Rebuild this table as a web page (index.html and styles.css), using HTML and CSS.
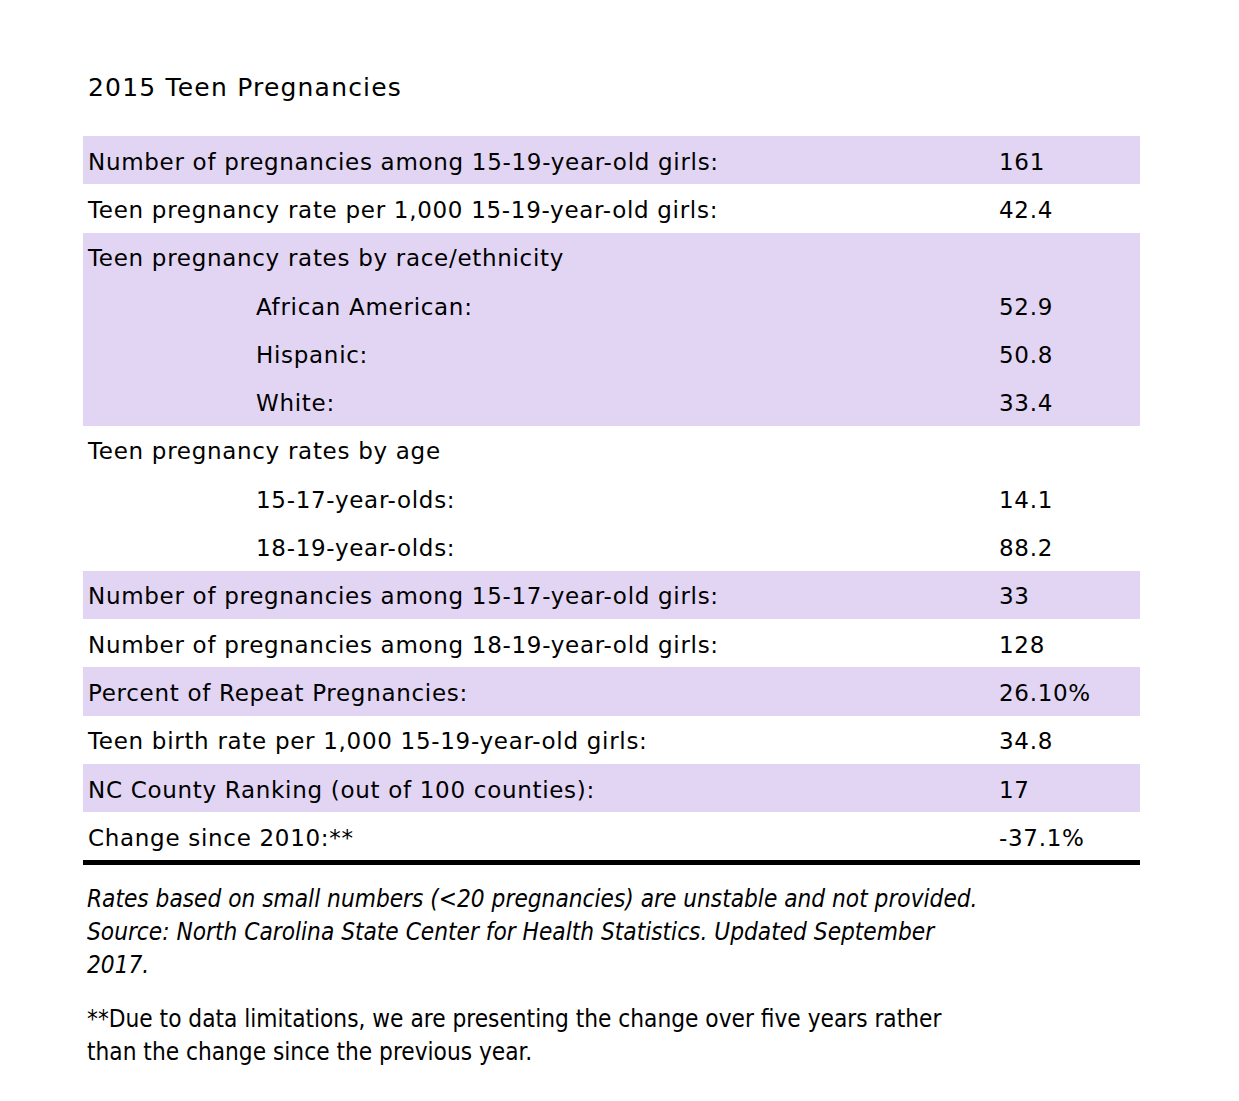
FILE: index.html
```html
<!DOCTYPE html>
<html lang="en">
<head>
<meta charset="utf-8">
<title>2015 Teen Pregnancies</title>
<link rel="stylesheet" href="styles.css">
</head>
<body>
<main class="page">
  <h1 class="title">2015 Teen Pregnancies</h1>
  <div class="stats">
    <div class="row shade"><span class="label">Number of pregnancies among 15-19-year-old girls:</span><span class="value">161</span></div>
    <div class="row"><span class="label">Teen pregnancy rate per 1,000 15-19-year-old girls:</span><span class="value">42.4</span></div>
    <div class="group shade">
      <div class="row"><span class="label">Teen pregnancy rates by race/ethnicity</span><span class="value"></span></div>
      <div class="row"><span class="label sub">African American:</span><span class="value">52.9</span></div>
      <div class="row"><span class="label sub">Hispanic:</span><span class="value">50.8</span></div>
      <div class="row"><span class="label sub">White:</span><span class="value">33.4</span></div>
    </div>
    <div class="group">
      <div class="row"><span class="label">Teen pregnancy rates by age</span><span class="value"></span></div>
      <div class="row"><span class="label sub">15-17-year-olds:</span><span class="value">14.1</span></div>
      <div class="row"><span class="label sub">18-19-year-olds:</span><span class="value">88.2</span></div>
    </div>
    <div class="row shade"><span class="label">Number of pregnancies among 15-17-year-old girls:</span><span class="value">33</span></div>
    <div class="row"><span class="label">Number of pregnancies among 18-19-year-old girls:</span><span class="value">128</span></div>
    <div class="row shade"><span class="label">Percent of Repeat Pregnancies:</span><span class="value">26.10%</span></div>
    <div class="row"><span class="label">Teen birth rate per 1,000 15-19-year-old girls:</span><span class="value">34.8</span></div>
    <div class="row shade"><span class="label">NC County Ranking (out of 100 counties):</span><span class="value">17</span></div>
    <div class="row last"><span class="label">Change since 2010:**</span><span class="value">-37.1%</span></div>
  </div>
  <p class="note italic">Rates based on small numbers (&lt;20 pregnancies) are unstable and not provided.<br>Source: North Carolina State Center for Health Statistics. Updated September 2017.</p>
  <p class="note">**Due to data limitations, we are presenting the change over five years rather than the change since the previous year.</p>
</main>
</body>
</html>
```
FILE: styles.css
```css
html, body {
  margin: 0;
  padding: 0;
  background: #ffffff;
}
body {
  font-family: "DejaVu Sans", sans-serif;
  color: #000000;
}
.page {
  padding: 70px 0 0 83px;
  width: 1057px;
}
.title {
  margin: 0 0 0 5px;
  font-size: 25px;
  letter-spacing: 1.2px;
  font-weight: normal;
  line-height: 36px;
}
.stats {
  margin-top: 30px;
  border-bottom: 5px solid #000000;
}
.row {
  box-sizing: border-box;
  display: flex;
  align-items: center;
  height: 48.3px;
  padding-top: 3px;
  font-size: 23px;
  letter-spacing: 0.7px;
}
.shade {
  background: #e2d5f3;
}
.label {
  box-sizing: border-box;
  flex: 0 0 916px;
  padding-left: 5px;
}
.label.sub {
  padding-left: 173px;
}
.value {
  flex: 1;
}
.note {
  box-sizing: border-box;
  width: 898px;
  margin: 18px 0 0 4px;
  font-family: "DejaVu Sans Condensed", "DejaVu Sans", sans-serif;
  font-size: 24.2px;
  line-height: 33px;
}
.note.italic {
  font-style: italic;
}
.note + .note {
  margin-top: 21px;
}
```
